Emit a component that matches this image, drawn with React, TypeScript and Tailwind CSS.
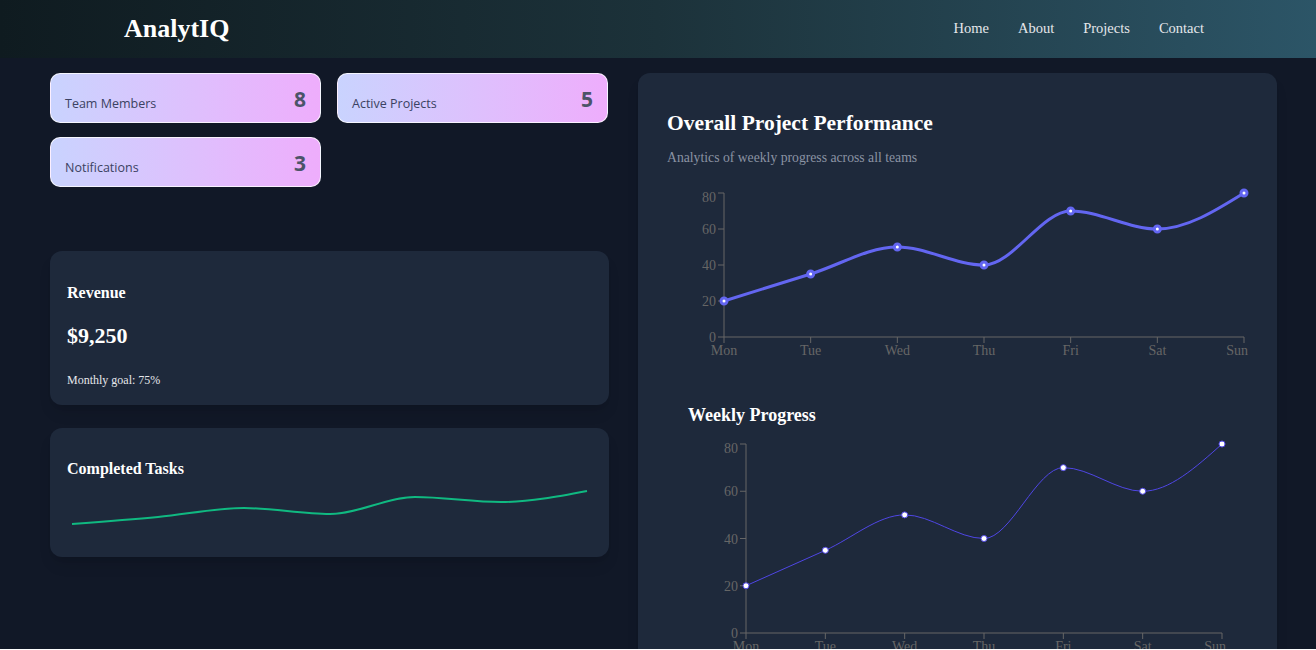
import React from "react";

type Pt = [number, number];

function sign(v: number) {
  return v < 0 ? -1 : 1;
}

function monotonePath(pts: Pt[]): string {
  const n = pts.length;
  if (n < 2) return "";
  const t: number[] = new Array(n).fill(0);
  for (let i = 1; i < n - 1; i++) {
    const [x0, y0] = pts[i - 1];
    const [x1, y1] = pts[i];
    const [x2, y2] = pts[i + 1];
    const h0 = x1 - x0;
    const h1 = x2 - x1;
    const s0 = (y1 - y0) / h0;
    const s1 = (y2 - y1) / h1;
    const p = (s0 * h1 + s1 * h0) / (h0 + h1);
    t[i] = (sign(s0) + sign(s1)) * Math.min(Math.abs(s0), Math.abs(s1), 0.5 * Math.abs(p)) || 0;
  }
  {
    const h = pts[1][0] - pts[0][0];
    t[0] = h ? (3 * (pts[1][1] - pts[0][1]) / h - t[1]) / 2 : t[1];
    const hl = pts[n - 1][0] - pts[n - 2][0];
    t[n - 1] = hl ? (3 * (pts[n - 1][1] - pts[n - 2][1]) / hl - t[n - 2]) / 2 : t[n - 2];
  }
  let d = `M${pts[0][0]},${pts[0][1]}`;
  for (let i = 0; i < n - 1; i++) {
    const [x0, y0] = pts[i];
    const [x1, y1] = pts[i + 1];
    const dx = (x1 - x0) / 3;
    d += ` C${x0 + dx},${y0 + dx * t[i]} ${x1 - dx},${y1 - dx * t[i + 1]} ${x1},${y1}`;
  }
  return d;
}

const days = ["Mon", "Tue", "Wed", "Thu", "Fri", "Sat", "Sun"];
const values = [20, 35, 50, 40, 70, 60, 80];
const ticks = [0, 20, 40, 60, 80];

function LineChart(props: {
  width: number;
  height: number;
  x0: number;
  x1: number;
  yTop: number;
  yBottom: number;
  variant: "bold" | "thin";
}) {
  const { width, height, x0, x1, yTop, yBottom, variant } = props;
  const sx = (i: number) => x0 + ((x1 - x0) * i) / 6;
  const sy = (v: number) => yBottom - ((yBottom - yTop) * v) / 80;
  const pts: Pt[] = values.map((v, i) => [sx(i), sy(v)]);
  const d = monotonePath(pts);
  const axis = "#666";
  return (
    <svg width={width} height={height} className="block overflow-visible" style={{ fontFamily: '"Liberation Serif", serif' }}>
      <line x1={x0} y1={yTop} x2={x0} y2={yBottom} stroke={axis} />
      <line x1={x0} y1={yBottom} x2={x1} y2={yBottom} stroke={axis} />
      {ticks.map((tv) => (
        <g key={tv}>
          <line x1={x0 - 6} y1={sy(tv)} x2={x0} y2={sy(tv)} stroke={axis} />
          <text x={x0 - 8} y={sy(tv) + (tv === 80 ? 9 : 5)} textAnchor="end" fill={axis} fontSize={14}>
            {tv}
          </text>
        </g>
      ))}
      {days.map((dname, i) => (
        <g key={dname}>
          <line x1={sx(i)} y1={yBottom} x2={sx(i)} y2={yBottom + 6} stroke={axis} />
          <text
            x={i === 6 ? sx(i) + 4 : sx(i)}
            y={yBottom + 18}
            textAnchor={i === 6 ? "end" : "middle"}
            fill={axis}
            fontSize={14}
          >
            {dname}
          </text>
        </g>
      ))}
      {variant === "bold" ? (
        <>
          <path d={d} fill="none" stroke="#6366f1" strokeWidth={3} />
          {pts.map(([x, y], i) => (
            <circle key={i} cx={x} cy={y} r={3} fill="#fff" stroke="#6366f1" strokeWidth={3} />
          ))}
        </>
      ) : (
        <>
          <path d={d} fill="none" stroke="#4f46e5" strokeWidth={1} />
          {pts.map(([x, y], i) => (
            <circle key={i} cx={x} cy={y} r={3} fill="#fff" stroke="#4f46e5" strokeWidth={1} />
          ))}
        </>
      )}
    </svg>
  );
}

function TasksLine() {
  const xs = [5, 91, 177, 263, 348, 434, 520];
  const ys = [39, 32, 23, 29, 12, 17, 6];
  const pts: Pt[] = xs.map((x, i) => [x, ys[i]]);
  return (
    <svg width={525} height={50} className="block">
      <path d={monotonePath(pts)} fill="none" stroke="#10b981" strokeWidth={2} />
    </svg>
  );
}

function StatCard({ label, value }: { label: string; value: string }) {
  return (
    <div className="h-[50px] rounded-[10px] border border-white/80 bg-gradient-to-r from-[#c9d3fe] to-[#eeadfc] px-[14px] pb-[9px] flex items-end justify-between">
      <span className="font-['Open_Sans',sans-serif] text-[12.5px] leading-[18px] text-[#3b4262]">{label}</span>
      <span className="font-['Open_Sans',sans-serif] font-bold text-[21px] leading-[28px] text-[#4b5468]">{value}</span>
    </div>
  );
}

export default function App() {
  return (
    <div className="h-[649px] overflow-hidden bg-[#111827] font-['Liberation_Serif',serif]">
      <header className="h-[58px] flex items-center justify-between pl-[124px] pr-[112px] bg-gradient-to-r from-[#0f1b20] via-[#1c323a] to-[#2c5567]">
        <div className="text-white font-bold text-[26px] leading-none">AnalytIQ</div>
        <nav className="flex gap-[29px] text-[14.5px] text-[#e5e7eb]">
          <span>Home</span>
          <span>About</span>
          <span>Projects</span>
          <span>Contact</span>
        </nav>
      </header>
      <main className="flex items-start gap-[29px] pl-[50px] pt-[15px]">
        <div className="w-[559px] flex flex-col">
          <div className="grid grid-cols-2 gap-x-[16px] gap-y-[14px] w-[558px]">
            <StatCard label="Team Members" value="8" />
            <StatCard label="Active Projects" value="5" />
            <StatCard label="Notifications" value="3" />
          </div>
          <div className="mt-[64px] rounded-xl bg-[#1e293b] px-[17px] pt-[32px] pb-[17px] shadow-lg">
            <h3 className="text-white font-bold text-[16px] leading-[20px]">Revenue</h3>
            <div className="mt-[18px] text-white font-bold text-[22px] leading-[30px]">$9,250</div>
            <div className="mt-[21px] text-[#e5e7eb] text-[12px] leading-[16px]">Monthly goal: 75%</div>
          </div>
          <div className="mt-[23px] rounded-xl bg-[#1e293b] px-[17px] pt-[31px] pb-[22px] shadow-lg">
            <h3 className="text-white font-bold text-[16px] leading-[20px]">Completed Tasks</h3>
            <div className="mt-[6px]">
              <TasksLine />
            </div>
          </div>
        </div>
        <section className="w-[639px] h-[600px] rounded-xl bg-[#1e293b] px-[29px] pt-[36px] shadow-lg">
          <h2 className="text-white font-bold text-[21.5px] leading-[28px]">Overall Project Performance</h2>
          <p className="mt-[11px] text-[#8b93a3] text-[13.7px] leading-[20px]">Analytics of weekly progress across all teams</p>
          <div className="mt-[15px]">
            <LineChart width={581} height={180} x0={57} x1={577} yTop={10} yBottom={154} variant="bold" />
          </div>
          <h3 className="mt-[40px] ml-[21px] text-white font-bold text-[18px] leading-[24px]">Weekly Progress</h3>
          <div className="mt-[8px]">
            <LineChart width={581} height={230} x0={79} x1={555} yTop={9} yBottom={198} variant="thin" />
          </div>
        </section>
      </main>
    </div>
  );
}
